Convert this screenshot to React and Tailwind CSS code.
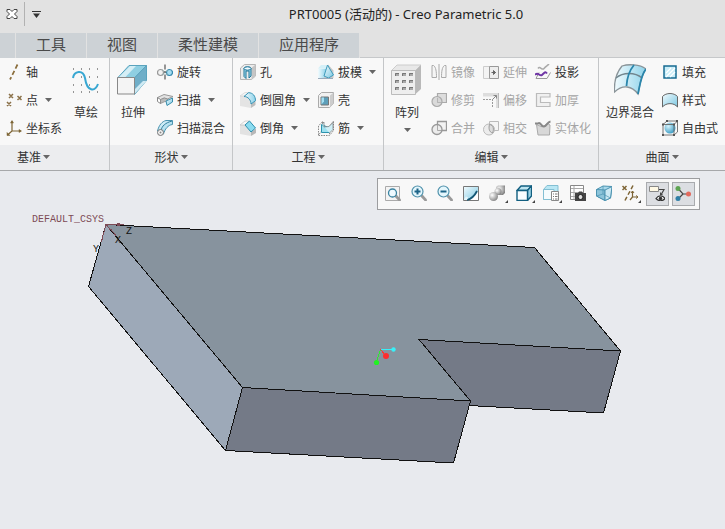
import React, { useState } from 'react';

const Caret = ({ className = '' }) => (
  <svg className={`shrink-0 text-[#666] ${className}`} width="7" height="4" viewBox="0 0 7 4" aria-hidden="true">
    <path d="M0 0h7L3.500 4z" fill="currentColor" />
  </svg>
);

const Icon = ({ size = 16, children }) => (
  <svg className="shrink-0" width={size} height={size} viewBox={`0 0 ${size} ${size}`} fill="none" aria-hidden="true">
    {children}
  </svg>
);

// Shared gradients for the ribbon and toolbar icons
const Gradients = () => (
  <svg width="0" height="0" className="absolute" aria-hidden="true">
    <defs>
      <linearGradient id="sky" x1="0" y1="0" x2="1" y2="1">
        <stop offset="0" stopColor="#f2fbfe" />
        <stop offset="1" stopColor="#7cc8e2" />
      </linearGradient>
      <linearGradient id="sky2" x1="0" y1="0" x2="1" y2="0">
        <stop offset="0" stopColor="#f2fbfe" />
        <stop offset="1" stopColor="#8fd3ea" />
      </linearGradient>
      <radialGradient id="ball" cx="0.35" cy="0.35" r="0.7">
        <stop offset="0" stopColor="#ffffff" />
        <stop offset="1" stopColor="#858585" />
      </radialGradient>
      <radialGradient id="blueBall" cx="0.35" cy="0.35" r="0.7">
        <stop offset="0" stopColor="#d6f3fc" />
        <stop offset="1" stopColor="#3a9cc4" />
      </radialGradient>
    </defs>
  </svg>
);

const icons = {
  axis: <path d="M11.500 0.500L4 15.500" stroke="#8a6d3b" strokeWidth="1.700" strokeDasharray="4.500 2.500" />,
  point: (
    <path
      d="M3 2l4 4M7 2L3 6M11.500 4l4 4M15.500 4l-4 4M1 10l4 4M5 10l-4 4"
      stroke="#8a7048"
      strokeWidth="1.500"
    />
  ),
  csys: (
    <g stroke="#7d6434" strokeWidth="1.200">
      <path d="M6 1v10h9M6 11l-4.500 4" />
      <path d="M4.500 3L6 0.500 7.500 3zM13 9.500l2.500 1.500L13 12.500zM1 12.500V15.500h3z" fill="#7d6434" strokeWidth="0.500" />
    </g>
  ),
  revolve: (
    <g strokeWidth="1.200">
      <circle cx="3.500" cy="8.500" r="3" fill="#f2f2f2" stroke="#999" />
      <circle cx="12.500" cy="8.500" r="3" fill="#a7def2" stroke="#3488ad" />
      <path d="M5 5.500l6 5.500M5 11l6-5" stroke="#8aa" strokeWidth="0.700" />
      <path d="M8 0.500v15" stroke="#555" strokeDasharray="5 1.500 2 1.500" />
    </g>
  ),
  sweep: (
    <g strokeLinejoin="round">
      <path d="M0.500 5.500L7 2.500l9 2-5.500 2.500-3.500-1-4 2z" fill="#e3e3e3" stroke="#999" />
      <path d="M0.500 5.500l3 2v4l-3-2z" fill="#fff" stroke="#888" />
      <path d="M3.500 7.500l4-1.500 3 1v3l-2.500-.5-4.500 2z" fill="#bbb" stroke="#888" strokeWidth="0.700" />
      <path d="M9 9l6.500-3v4L10 13.500z" fill="url(#sky)" stroke="#3b8fae" />
    </g>
  ),
  sweepBlend: (
    <g>
      <path d="M0.500 11C2 5 5 1.500 9 0.500h6.500v4C11 5 8 9 6.500 14z" fill="url(#sky)" stroke="#4a94b0" />
      <path d="M4 10.500C5 6 8 3 15 1" stroke="#2f7d9d" />
      <circle cx="3.500" cy="12.500" r="3" fill="#eee" stroke="#777" />
      <path d="M3.500 11.500v2M2.500 12.500h2" stroke="#777" strokeWidth="0.600" />
    </g>
  ),
  hole: (
    <g>
      <path d="M0.500 4l4-3.500h11V12l-4 3.500H0.500z" fill="#ececec" stroke="#b5b5b5" />
      <path d="M11.500 4l4-3.500V12l-4 3.500z" fill="#c5c5c5" />
      <path d="M4 4.500C4 2.500 11 2.500 11 4.500V12l-2 2V7H6v7.500l-2-2z" fill="#a4dcf0" stroke="#1f7699" />
      <ellipse cx="7.500" cy="4.500" rx="3.500" ry="1.700" fill="#eefaff" stroke="#1f7699" />
    </g>
  ),
  round: (
    <g>
      <path d="M0 4h5c4 .5 6 3 6 8v4L0 14z" fill="#e4e4e4" />
      <path d="M0 4L5 0.500h4L5 4z" fill="#f5f5f5" stroke="#ccc" strokeWidth="0.600" />
      <path d="M11 12l4.500-3v4L11 16z" fill="#bdbdbd" />
      <path d="M4 4.500L8.500 0.700c4.500 0 7 3.500 7 8L11 12c0-4-3-7.500-7-7.500z" fill="url(#sky2)" stroke="#3793b5" />
    </g>
  ),
  chamfer: (
    <g>
      <path d="M0 5h5l6 7v4L0 14z" fill="#e2e2e2" />
      <path d="M0 5L5 1h4L5 5z" fill="#f7f7f7" stroke="#bbb" strokeWidth="0.600" />
      <path d="M11 12l5-3.500V13l-5 3z" fill="#b8b8b8" />
      <path d="M5 5l4.500-4L15.500 8 11 12z" fill="#8cdcf0" stroke="#2c8eae" />
    </g>
  ),
  draft: (
    <g>
      <path d="M0 5h8v9H0z" fill="url(#sky2)" />
      <path d="M0 4.500L3 1h6L8 5z" fill="#d4f0f8" />
      <path d="M6 14L10 0.500l5.500 6V14z" fill="#c9c9c9" />
      <path d="M6 12l3.500-11 6 10-5 3z" fill="url(#sky)" stroke="#3f9cbc" />
      <path d="M0 14.500h15" stroke="#9ab" />
    </g>
  ),
  shell: (
    <g>
      <path d="M0.500 3.500l3-3h12v11l-4 4H0.500z" fill="#f1f1f1" stroke="#aaa" />
      <path d="M12 3.500l3.500-3v11l-3.500 4z" fill="#ccc" />
      <path d="M3 5h7.500v8H3z" fill="#5d9fba" stroke="#777" />
      <path d="M3.500 5.500h2.500v4l-2.500 3z" fill="#a4dff2" />
    </g>
  ),
  rib: (
    <g>
      <path d="M0.500 15V6l4-4.500V10l-4 5zM4.500 10h8M0.500 15.500h11l4-5V1l-4 5v9" stroke="#888" strokeDasharray="1.500 1" />
      <path d="M3.500 4.500V12.500h8V8z" fill="#9de0ef" stroke="#2b93ae" />
      <path d="M4 4l2-2v5l5-.5 4-4v7L11.500 13" fill="#cfeff7" stroke="#777" strokeWidth="0.700" />
    </g>
  ),
  mirror: (
    <g stroke="#aaa">
      <path d="M1 1.500h1.500C5 3 5.500 8 5.500 13.500H1zM15 1.500h-1.500C11 3 10.500 8 10.500 13.500H15z" fill="#f5f5f5" />
      <path d="M8 0v16" />
    </g>
  ),
  trim: (
    <g stroke="#aaa" strokeWidth="1.200">
      <path d="M6.500 1.500h9v9h-9z" fill="#ddd" />
      <circle cx="6" cy="9.500" r="5" fill="#d5d5d5" fillOpacity="0.850" />
      <path d="M6.500 6v4.500h4" strokeWidth="0.700" />
    </g>
  ),
  merge: (
    <g stroke="#999" strokeWidth="1.300">
      <path d="M6.500 1.500h9v9h-9z" fill="#f3f3f3" />
      <circle cx="6" cy="9.500" r="5" fill="#ececec" />
      <path d="M6.500 5v5.500h4.500" strokeWidth="0.800" />
    </g>
  ),
  extend: (
    <g>
      <path d="M0.500 2.500h6v12h-6z" fill="#f3f3f3" stroke="#ccc" />
      <path d="M6.500 2.500h9v12h-9z" fill="#eee" stroke="#999" />
      <path d="M8.500 8.500h4M10.500 6.500l2 2-2 2z" stroke="#666" fill="#666" />
    </g>
  ),
  offset: (
    <g>
      <path d="M0 1h16v15h-3V4.500H0z" fill="#ddd" />
      <path d="M0 7.500h9.500V16" stroke="#999" strokeDasharray="2 1" />
      <path d="M9.500 7.500l4-4M10.500 3.500h3v3" stroke="#888" />
      <path d="M15.500 1v15" stroke="#bbb" />
    </g>
  ),
  intersect: (
    <g stroke="#bbb">
      <path d="M6.500 1.500h9v9h-9z" fill="#f5f5f5" />
      <circle cx="6" cy="9.500" r="5.500" fill="#e8e8e8" fillOpacity="0.800" />
      <path d="M6.500 4.500C11 5 11 10 9.500 13C6 12 5.500 8 6.500 4.500z" fill="#ddd" stroke="#999" />
    </g>
  ),
  project: (
    <g strokeWidth="1.500">
      <path d="M3 4.500c2-3 4 2.500 6 0S12 2 14 0" stroke="#aaa" />
      <path d="M4 8.500L1 14.500h11l3.500-6" stroke="#999" strokeWidth="1" />
      <path d="M0 11c3-4 4.500 2 7 0s3-4 5-1.500" stroke="#6f35a5" strokeWidth="2" />
    </g>
  ),
  thicken: <path d="M15 1.500H1.500v13H15v-4H5.500V5H15z" fill="#f0f0f0" stroke="#bbb" strokeWidth="1.200" />,
  solidify: (
    <g>
      <path d="M1.500 4.500L3 15h11.500l.5-10C11 1.500 9 8 6 6.500z" fill="#d8d8d8" stroke="#aaa" />
      <path d="M0 3.500h3c3-2 3 3.500 6 3S12 2 15.500 1.500" stroke="#888" strokeWidth="2" />
    </g>
  ),
  fill: (
    <g>
      <path d="M2 2h12v12H2z" fill="#c9edf8" stroke="#176b91" strokeWidth="1.500" />
      <path d="M4 9l5-5M4 13l9-9M8 13l5-5" stroke="#fff" strokeWidth="1.200" />
    </g>
  ),
  style: <path d="M0.500 4.500C4 0.500 12 0.500 15.500 4.500v10.500C12 10.500 4 10.500 0.500 15z" fill="url(#sky)" stroke="#666" />,
  freestyle: (
    <g>
      <circle cx="8" cy="8" r="5.500" fill="url(#blueBall)" />
      <path d="M1 4.500h11V15H1zM1 4.500l4-3.500h10.500v11L12 15M12 4.500L15.500 1" stroke="#666" strokeWidth="0.900" />
      <path d="M0 3.500h2v2H0zM11 3.500h2v2h-2zM0 14h2v2H0zM11 14h2v2h-2zM14 0h2v2h-2zM4 0h2v2H4z" fill="#555" />
    </g>
  ),
};

const bigIcons = {
  sketch: (
    <g>
      <path
        d="M3 5h1M11 5h1M19 5h1M27 5h1M3 13h1M11 13h1M19 13h1M27 13h1M3 21h1M11 21h1M19 21h1M27 21h1M3 28h1M11 28h1M19 28h1M27 28h1"
        stroke="#333"
      />
      <path d="M3 14C4 7 13 5 15 14C17 28 25 28 28 20" stroke="#37a7d2" strokeWidth="2" />
    </g>
  ),
  extrude: (
    <g strokeWidth="1">
      <path d="M0.500 14L12 1.500h17.500L17.500 14z" fill="#8fcfe2" stroke="#5aa3bd" />
      <path d="M1.500 13.500L13 2h6L8 13.500z" fill="#d5eef5" />
      <path d="M17.500 14l12-12.500v15l-12 14z" fill="#6faec8" stroke="#5aa3bd" />
      <path d="M18 29.500V25L26 17h3.500z" fill="#cfeaf3" />
      <path d="M0.500 13.500h17v16.500h-17z" fill="#f4f4f4" stroke="#888" />
    </g>
  ),
  pattern: (
    <g>
      <path d="M0.500 6.500L6 1h24l-6 6z" fill="#e8e8e8" stroke="#ccc" />
      <path d="M24 7l6-6v24l-6 5.500z" fill="#b9b9b9" />
      <path d="M0.500 6.500h24v24h-24z" fill="#eee" stroke="#bbb" />
      {[9, 16, 23].map((y) =>
        [4, 11, 18].map((x) => (
          <g key={`${x}-${y}`}>
            <rect x={x} y={y} width="4" height="3" fill="#a8a8a8" />
            <path d={`M${x + 0.500} ${y + 3}v-2.500h3.500`} stroke="#777" />
          </g>
        ))
      )}
    </g>
  ),
  boundary: (
    <g strokeWidth="1.300">
      <path d="M8 2C14 0 26 0 32 5C27 11 26 20 24 30C18 22 9 20 0.500 28C0 18 2 9 8 2z" fill="url(#sky2)" stroke="#8a9499" />
      <path d="M2 14C9 8 21 8 28 14" stroke="#71858e" />
      <path d="M20 1C15 7 13 14 12.500 22M32 5C27 11 26 20 24 30" stroke="#2a86ac" strokeWidth="1.800" />
    </g>
  ),
};

const Handle = () => <path d="M10.500 10.500l5 5.500" stroke="#999" strokeWidth="2.800" />;

const viewTools = [
  {
    name: '重新调整',
    icon: (
      <g>
        <path d="M0.500 1.500h14v14H0.500z" fill="#f4f4f4" stroke="#aaa" />
        <Handle />
        <circle cx="7.500" cy="8" r="4" fill="#eefaff" stroke="#3a83a1" strokeWidth="1.300" />
      </g>
    ),
  },
  {
    name: '放大',
    icon: (
      <g>
        <Handle />
        <circle cx="6.500" cy="6.500" r="5.500" fill="#e4f6fc" stroke="#4f91ab" strokeWidth="1.200" />
        <path d="M3.500 6.500h6M6.500 3.500v6" stroke="#1d6488" strokeWidth="2" />
      </g>
    ),
  },
  {
    name: '缩小',
    icon: (
      <g>
        <Handle />
        <circle cx="6.500" cy="6.500" r="5.500" fill="#e4f6fc" stroke="#4f91ab" strokeWidth="1.200" />
        <path d="M3.500 6.500h6" stroke="#1d6488" strokeWidth="2" />
      </g>
    ),
  },
  {
    name: '重画',
    icon: (
      <g>
        <path d="M0.500 1.500h15v14h-15z" fill="url(#sky)" stroke="#777" />
        <path d="M5 15C9 14 13 10 15 6v9z" fill="#fff" />
        <path d="M4 15C8 14 12 10 14 6" stroke="#145775" strokeWidth="1.800" />
        <path d="M1 14l2-2.500 2 1-1 2.500H1z" fill="#e5f5fa" />
      </g>
    ),
  },
  {
    name: '渲染选项',
    menu: true,
    icon: (
      <g>
        <path d="M7 2l2-1.500h7V8l-2 2H8z" fill="url(#ball)" />
        <circle cx="9" cy="6.500" r="3.500" fill="url(#ball)" />
        <circle cx="4.500" cy="11.500" r="4.500" fill="url(#ball)" />
      </g>
    ),
  },
  {
    name: '显示样式',
    menu: true,
    icon: (
      <g stroke="#125f80" strokeWidth="1.400" strokeLinejoin="round">
        <path d="M1 5.500L5 1h10.500l-4 4.500z" fill="#bde4f0" />
        <path d="M11.500 5.500l4-4.500v10l-4 4.500z" fill="#9bd3e6" />
        <path d="M1 5.500h10.500v10H1z" fill="#f9fdff" />
      </g>
    ),
  },
  {
    name: '已保存方向',
    menu: true,
    icon: (
      <g>
        <path d="M0.500 4.500L4 0.500h11v11l-3.500 3H.5z" fill="#b9e7f4" stroke="#83bfd3" />
        <path d="M0.500 4.500h10.500v10H.5z" fill="#f5fbfd" stroke="#83bfd3" />
        <path d="M8.500 6.500h7v9h-7z" fill="#fff" stroke="#888" />
        <path d="M10 9h1M12 9h2.500M10 11.500h1M12 11.500h2.500M10 14h1M12 14h2.500" stroke="#777" />
      </g>
    ),
  },
  {
    name: '视图管理器',
    icon: (
      <g>
        <path d="M0.500 0.500h13v14H.5z" fill="#fff" stroke="#888" />
        <path d="M1 3.500h12M1 7.500h12M1 11.500h12M4 1v13" stroke="#aaa" />
        <path d="M5 8h3l1-1.500h3L13 8h3v8H5z" fill="#444" />
        <circle cx="10.500" cy="12" r="2.500" fill="#ddd" stroke="#222" />
      </g>
    ),
  },
  {
    name: '透视图',
    icon: (
      <g stroke="#4c93b0" strokeLinejoin="round">
        <path d="M0.500 4.500L7 1l9 .5L14.500 13 9 15.500.5 11z" fill="#a8d8ea" />
        <path d="M0.500 4.500L9 5v10.500L.5 11z" fill="#8cc4da" />
        <path d="M9 5l7-3.500L14.500 13 9 15.500z" fill="#cbe9f4" />
        <path d="M7 1v8l7.500 4M7 9l-6.500 2" strokeWidth="0.700" />
      </g>
    ),
  },
  {
    name: '基准显示过滤器',
    menu: true,
    icon: (
      <g stroke="#7d6434" strokeWidth="1.500">
        <path d="M0.500 1l4 4M4.500 1l-4 4" />
        <path d="M11 0.500L3 15.500" strokeDasharray="4 2.500" />
        <path d="M10.500 6v6H16M10.500 12L8 15" strokeWidth="1.200" />
        <path d="M9 8l1.500-2L12 8M14 10.500l2 1.500-2 1.500" strokeWidth="1" />
      </g>
    ),
  },
  {
    name: '注释显示',
    toggle: true,
    icon: (
      <g>
        <path d="M0.500 1.500h9v5h-9z" fill="#fff9e5" stroke="#888" />
        <path d="M10 4.500h5L12.500 9" stroke="#444" strokeWidth="1.200" />
        <path d="M11 7v3h3z" fill="#444" />
        <path d="M7 13.500c2.500-3.500 6.500-3.500 9 0c-2.500 3-6.500 3-9 0z" fill="#fff" stroke="#333" strokeWidth="1.200" />
        <circle cx="11.500" cy="13.500" r="1.800" fill="#333" />
      </g>
    ),
  },
  {
    name: '旋转中心',
    toggle: true,
    icon: (
      <g>
        <path d="M3 3.500l5 5.500h6M8 9l-5 5" stroke="#444" strokeWidth="1.200" />
        <circle cx="3" cy="3.500" r="2.500" fill="#5ea452" />
        <circle cx="13.500" cy="9" r="2.500" fill="#e26a5e" />
        <circle cx="3" cy="13.500" r="2.500" fill="#2f7fa6" />
      </g>
    ),
  },
];

const tabs = ['工具', '视图', '柔性建模', '应用程序'];

const Command = ({ icon, label, menu, disabled }) => (
  <button
    type="button"
    disabled={disabled}
    className={`flex h-7 items-center gap-1 whitespace-nowrap ${disabled ? 'text-[#a5a5a5]' : 'text-[#333]'}`}
  >
    <Icon>{icons[icon]}</Icon>
    <span>{label}</span>
    {menu && <Caret className="ml-[3px]" />}
  </button>
);

const BigCommand = ({ icon, label, menu, className = '' }) => (
  <button type="button" className={`flex flex-col items-center gap-1 self-start pt-1.5 whitespace-nowrap ${className}`}>
    <Icon size={32}>{bigIcons[icon]}</Icon>
    <span className="leading-6">{label}</span>
    {menu && <Caret />}
  </button>
);

const Column = ({ items, className = '' }) => (
  <div className={`flex flex-col items-start ${className}`}>
    {items.map((item) => (
      <Command key={item.label} {...item} />
    ))}
  </div>
);

const Group = ({ title, className = '', titleClass = '', children }) => (
  <section className={`flex flex-col border-r border-[#c4c6c8] last:border-r-0 ${className}`}>
    <div className="flex h-[87px]">{children}</div>
    <button
      type="button"
      className={`flex h-[25px] items-center justify-center gap-0.5 bg-[#ecedef] pb-0.5 ${titleClass}`}
    >
      {title}
      <Caret />
    </button>
  </section>
);

const Ribbon = () => (
  <div className="flex border-b border-[#a6a8aa] bg-[#f8f8f8] text-xs text-[#333]">
    <Group title="基准" titleClass="pr-[42px]">
      <Column
        className="w-[70px] pl-1.5"
        items={[
          { icon: 'axis', label: '轴' },
          { icon: 'point', label: '点', menu: true },
          { icon: 'csys', label: '坐标系' },
        ]}
      />
      <BigCommand icon="sketch" label="草绘" className="pr-[7px]" />
    </Group>
    <Group title="形状">
      <BigCommand icon="extrude" label="拉伸" className="pr-2 pl-[7px]" />
      <Column
        className="pr-[7px]"
        items={[
          { icon: 'revolve', label: '旋转' },
          { icon: 'sweep', label: '扫描', menu: true },
          { icon: 'sweepBlend', label: '扫描混合' },
        ]}
      />
    </Group>
    <Group title="工程">
      <Column
        className="w-[85px] pl-[7px]"
        items={[
          { icon: 'hole', label: '孔' },
          { icon: 'round', label: '倒圆角', menu: true },
          { icon: 'chamfer', label: '倒角', menu: true },
        ]}
      />
      <Column
        className="pr-[7px]"
        items={[
          { icon: 'draft', label: '拔模', menu: true },
          { icon: 'shell', label: '壳' },
          { icon: 'rib', label: '筋', menu: true },
        ]}
      />
    </Group>
    <Group title="编辑">
      <BigCommand icon="pattern" label="阵列" menu className="pr-2 pl-[7px]" />
      <Column
        className="w-[52px]"
        items={[
          { icon: 'mirror', label: '镜像', disabled: true },
          { icon: 'trim', label: '修剪', disabled: true },
          { icon: 'merge', label: '合并', disabled: true },
        ]}
      />
      <Column
        className="w-[52px]"
        items={[
          { icon: 'extend', label: '延伸', disabled: true },
          { icon: 'offset', label: '偏移', disabled: true },
          { icon: 'intersect', label: '相交', disabled: true },
        ]}
      />
      <Column
        className="pr-[7px]"
        items={[
          { icon: 'project', label: '投影' },
          { icon: 'thicken', label: '加厚', disabled: true },
          { icon: 'solidify', label: '实体化', disabled: true },
        ]}
      />
    </Group>
    <Group title="曲面" className="flex-1">
      <BigCommand icon="boundary" label="边界混合" className="pr-2 pl-[7px]" />
      <Column
        items={[
          { icon: 'fill', label: '填充' },
          { icon: 'style', label: '样式' },
          { icon: 'freestyle', label: '自由式' },
        ]}
      />
    </Group>
  </div>
);

const ViewToolbar = () => {
  const [pressed, setPressed] = useState({ 注释显示: true, 旋转中心: true });

  return (
    <div
      role="toolbar"
      className="absolute top-[7px] right-[25px] flex gap-[3px] border border-[#9c9d9f] bg-[#f8f8f8] px-1 py-[3px]"
    >
      {viewTools.map((tool) => (
        <button
          key={tool.name}
          type="button"
          aria-label={tool.name}
          aria-pressed={tool.toggle ? Boolean(pressed[tool.name]) : undefined}
          onClick={() => tool.toggle && setPressed({ ...pressed, [tool.name]: !pressed[tool.name] })}
          className={`flex h-6 items-center border pb-0.5 pl-0.5 ${tool.menu ? 'w-6' : 'w-[23px]'} ${
            pressed[tool.name] ? 'border-[#a9abae] bg-[#dcdee2]' : 'border-transparent'
          }`}
        >
          <Icon>{tool.icon}</Icon>
          {tool.menu && (
            <svg className="shrink-0 self-end" width="3" height="3" viewBox="0 0 3 3" aria-hidden="true">
              <path d="M3 0v3H0z" fill="#444" />
            </svg>
          )}
        </button>
      ))}
    </div>
  );
};

const Model = () => (
  <svg className="block h-auto w-full" viewBox="0 171 725 358" role="img" aria-label="PRT0005">
    <g stroke="#111" strokeWidth="1" shapeRendering="crispEdges" strokeLinejoin="round">
      <path d="M419 339.500L620.500 351 603.500 413 469 405.500z" fill="#747a87" />
      <path d="M106 224.500L534.500 247.500 620.500 351 419 339.500 470.500 401 242.500 387.500z" fill="#87939e" />
      <path d="M106 224.500L242.500 387.500 225.500 450.500 88.500 286.500z" fill="#9da9b8" />
      <path d="M242.500 387.500L470.500 401 453.500 463 225.500 450.500z" fill="#747a87" />
    </g>

    {/* Default coordinate system */}
    <g stroke="#7d4a55" shapeRendering="crispEdges">
      <path d="M106 224.500h18M106 224.500l10 11M106 224.500l-5 18" />
      <path d="M117 223.500h3M117 225.500h3M109 229.500h3M102 236.500v3" />
    </g>
    <g className="font-['Liberation_Mono',monospace] text-[10px]">
      <text x="32" y="222" fill="#7d4a55">DEFAULT_CSYS</text>
      <text x="126" y="234" fill="#111">Z</text>
      <text x="115" y="243" fill="#111">X</text>
      <text x="93" y="252" fill="#111">Y</text>
    </g>

    {/* Spin center */}
    <g shapeRendering="crispEdges">
      <path d="M380 349h13v1h-13z" fill="#38f0f8" />
      <path d="M380.500 349.500l-4 12" stroke="#2fe82f" />
      <path d="M380.500 349.500l5 6" stroke="#f33" />
    </g>
    <circle cx="393.500" cy="349.500" r="2.200" fill="#38f0f8" />
    <circle cx="376.500" cy="362.500" r="2.600" fill="#22f022" />
    <circle cx="386" cy="356" r="3" fill="#ff2d2d" />
  </svg>
);

export default function App() {
  return (
    <div className="flex min-h-screen flex-col bg-[#e8eaee] font-['Noto_Sans_CJK_SC',sans-serif]">
      <Gradients />
      <header className="bg-[#e2e2e2]">
        <div className="flex h-[33px] items-start">
          <div className="flex w-[87px] items-center pt-0.5">
            <button type="button" aria-label="关闭" className="px-1.5">
              <svg width="12" height="12" viewBox="0 0 12 12" aria-hidden="true">
                <path d="M1 1.500h3l2 2 2-2h3v2L8.500 6 11 8.500v2H8l-2-2-2 2H1v-2L3.500 6 1 3.500z" fill="#fff" stroke="#444" />
              </svg>
            </button>
            <span className="h-6 w-px bg-[#b2b2b2]" />
            <button type="button" aria-label="自定义快速访问工具栏" className="px-[7px]">
              <svg width="9" height="7" viewBox="0 0 9 7" aria-hidden="true">
                <path d="M0 0h9v1H0zM1 2.500h7L4.500 7z" fill="#333" />
              </svg>
            </button>
          </div>
          <h1 className="flex-1 text-center font-['Noto_Sans','Noto_Sans_CJK_SC',sans-serif] text-[13px] leading-7 text-[#222]">
            PRT0005 (活动的) - Creo Parametric 5.0
          </h1>
        </div>
        <nav className="flex h-[25px] gap-px text-[15px] text-[#4a4a4a]">
          <span className="w-[15px] bg-[#cdd2d6]" />
          {tabs.map((tab) => (
            <button key={tab} type="button" className="bg-[#cdd2d6] px-5 pb-1 leading-5">
              {tab}
            </button>
          ))}
          <span className="flex-1 border-b border-[#c6c8ca]" />
        </nav>
      </header>
      <Ribbon />
      <main className="relative flex-1">
        <Model />
        <ViewToolbar />
      </main>
    </div>
  );
}
